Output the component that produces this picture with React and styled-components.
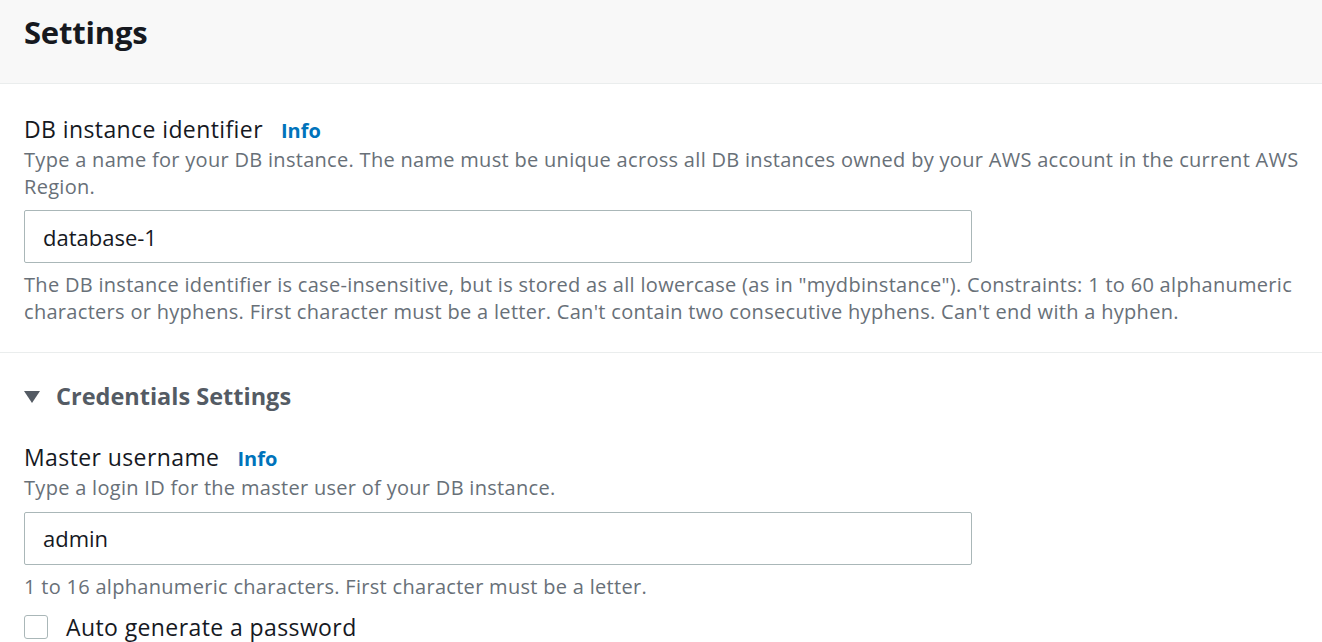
import React from 'react';
import styled, { createGlobalStyle } from 'styled-components';

const GlobalStyle = createGlobalStyle`
  body {
    margin: 0;
    background: #ffffff;
    font-family: "Open Sans", "Noto Sans", sans-serif;
  }
`;

const Page = styled.div`
  width: 1322px;
  height: 642px;
  overflow: hidden;
  background: #fff;
`;

const Header = styled.div`
  height: 84px;
  background: #f8f8f8;
  border-bottom: 1px solid #eaeded;
  padding: 0 24px;
  display: flex;
  align-items: center;
  box-sizing: border-box;
`;

const Title = styled.h2`
  margin: 0;
  margin-top: -20px;
  font-size: 31px;
  font-weight: 700;
  color: #16191f;
  letter-spacing: -0.2px;
`;

const Section = styled.div`
  padding: ${p => p.$pad || '27px 12px 27px 24px'};
  border-bottom: ${p => (p.$divider ? '1px solid #eaeded' : 'none')};
`;

const Field = styled.div`
  display: flex;
  flex-direction: column;
  margin-top: ${p => p.$top || '0'};
`;

const LabelRow = styled.div`
  display: flex;
  align-items: baseline;
  gap: 18px;
  height: 36px;
  line-height: 36px;
`;

const Label = styled.span`
  font-size: 23px;
  letter-spacing: 0.4px;
  color: #16191f;
`;

const InfoLink = styled.a`
  font-size: 20px;
  font-weight: 700;
  color: #0073bb;
  text-decoration: none;
`;

const Hint = styled.div`
  font-size: 20px;
  letter-spacing: 0.3px;
  line-height: 26.5px;
  color: #687078;
`;

const Input = styled.div`
  width: 948px;
  height: 53px;
  box-sizing: border-box;
  border: 1px solid #aab7b8;
  border-radius: 2px;
  margin: 10px 0 9px;
  padding: 0 18px;
  display: flex;
  align-items: center;
  font-size: 22px;
  color: #16191f;
`;

const ExpandRow = styled.div`
  display: flex;
  align-items: center;
  gap: 16px;
  height: 32px;
`;

const Caret = styled.span`
  width: 0;
  height: 0;
  border-left: 8px solid transparent;
  border-right: 8px solid transparent;
  border-top: 12px solid #545b64;
  margin-top: 1px;
`;

const ExpandTitle = styled.span`
  font-size: 23.5px;
  font-weight: 700;
  color: #545b64;
`;

const CheckRow = styled.label`
  display: flex;
  align-items: center;
  gap: 18px;
  margin-top: 15px;
  height: 24px;
`;

const CheckBox = styled.span`
  width: 24px;
  height: 24px;
  border: 1px solid #aab7b8;
  border-radius: 3px;
  box-sizing: border-box;
  background: #fff;
`;

const CheckText = styled.span`
  font-size: 23px;
  letter-spacing: 0.4px;
  color: #16191f;
`;

export default function App() {
  return (
    <Page>
      <GlobalStyle />
      <Header>
        <Title>Settings</Title>
      </Header>

      <Section $divider>
        <Field>
          <LabelRow>
            <Label>DB instance identifier</Label>
            <InfoLink>Info</InfoLink>
          </LabelRow>
          <Hint>
            Type a name for your DB instance. The name must be unique across all DB instances owned by your AWS account in the current AWS Region.
          </Hint>
          <Input>database-1</Input>
          <Hint>
            The DB instance identifier is case-insensitive, but is stored as all lowercase (as in "mydbinstance"). Constraints: 1 to 60 alphanumeric characters or hyphens. First character must be a letter. Can't contain two consecutive hyphens. Can't end with a hyphen.
          </Hint>
        </Field>
      </Section>

      <Section $pad="27px 12px 0 24px">
        <ExpandRow>
          <Caret />
          <ExpandTitle>Credentials Settings</ExpandTitle>
        </ExpandRow>
        <Field $top="27px">
          <LabelRow>
            <Label>Master username</Label>
            <InfoLink>Info</InfoLink>
          </LabelRow>
          <Hint>Type a login ID for the master user of your DB instance.</Hint>
          <Input>admin</Input>
          <Hint>1 to 16 alphanumeric characters. First character must be a letter.</Hint>
        </Field>
        <CheckRow>
          <CheckBox />
          <CheckText>Auto generate a password</CheckText>
        </CheckRow>
      </Section>
    </Page>
  );
}
